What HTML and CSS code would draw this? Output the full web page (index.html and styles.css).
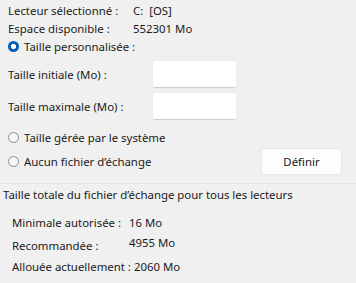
FILE: index.html
```html
<!DOCTYPE html>
<html lang="fr">
<head>
<meta charset="utf-8">
<link rel="stylesheet" href="styles.css">
</head>
<body>
<div class="panel">
  <div class="info">
    <span>Lecteur sélectionné :</span><span>C:&nbsp;&nbsp;[OS]</span>
    <span>Espace disponible :</span><span>552301 Mo</span>
  </div>
  <div class="radio-row top-radio"><span class="radio on"></span><span>Taille personnalisée :</span></div>
  <div class="field-row"><span class="label">Taille initiale (Mo) :</span><span class="input"></span></div>
  <div class="field-row"><span class="label">Taille maximale (Mo) :</span><span class="input"></span></div>
  <div class="radio-row sys"><span class="radio"></span><span>Taille gérée par le système</span></div>
  <div class="radio-row none">
    <span class="radio"></span><span class="grow">Aucun fichier d’échange</span>
    <span class="button">Définir</span>
  </div>
  <div class="sep"></div>
  <div class="total-title">Taille totale du fichier d’échange pour tous les lecteurs</div>
  <div class="totals">
    <div class="trow r1"><span class="tlabel">Minimale autorisée :</span><span class="val">16 Mo</span></div>
    <div class="trow r2"><span class="tlabel">Recommandée :</span><span class="val up">4955 Mo</span></div>
    <div class="trow r3"><span class="tlabel">Allouée actuellement :</span><span class="val">2060 Mo</span></div>
  </div>
</div>
</body>
</html>
```
FILE: styles.css
```css
html, body {
  margin: 0;
  padding: 0;
  background: #f0f0f0;
}
body {
  width: 356px;
  height: 283px;
  overflow: hidden;
  font-family: "Noto Sans", "Open Sans", sans-serif;
  font-size: 11.4px;
  color: #1a1a1a;
  white-space: nowrap;
}
.panel {
  display: flex;
  flex-direction: column;
}
.info {
  display: grid;
  grid-template-columns: 125px auto;
  grid-auto-rows: 18px;
  align-items: center;
  padding: 1px 8px 0;
}
.radio-row {
  display: flex;
  align-items: center;
  padding-left: 8px;
}
.top-radio { height: 19px; }
.radio {
  width: 11px;
  height: 11px;
  border-radius: 50%;
  box-sizing: border-box;
  border: 1px solid #8b8b8b;
  background: #f7f7f7;
  margin-right: 5px;
  flex: none;
}
.radio.on {
  border: none;
  background: radial-gradient(circle, #fff 0 2.3px, #005fb8 2.9px);
}
.field-row {
  display: flex;
  align-items: center;
  padding-left: 8px;
  margin-top: 5px;
}
.label { width: 145px; }
.input {
  width: 83px;
  height: 26px;
  background: #fff;
  border-bottom: 1px solid #cfcfcf;
  border-radius: 2px;
  box-shadow: 0 0 0 1px #ececec;
}
.sys {
  height: 22px;
  margin-top: 6px;
}
.none {
  height: 27px;
  padding-right: 14px;
}
.grow { flex: 1; }
.button {
  width: 79px;
  height: 25px;
  display: flex;
  align-items: center;
  justify-content: center;
  background: #fdfdfd;
  border: 1px solid #e6e6e6;
  border-radius: 3px;
}
.sep {
  height: 1px;
  background: #e3e3e3;
  margin-top: 8px;
}
.total-title {
  padding-left: 3px;
  height: 22px;
  line-height: 22px;
}
.totals {
  display: flex;
  flex-direction: column;
  padding-left: 12px;
  margin-top: 5px;
}
.trow {
  display: flex;
  align-items: center;
}
.r1 { height: 22px; }
.r2 { height: 23px; padding-top: 2px; box-sizing: border-box; }
.r3 { height: 20px; }
.tlabel { min-width: 117px; }
.r3 .tlabel { margin-right: 3px; }
.up { position: relative; top: -3px; }
```
